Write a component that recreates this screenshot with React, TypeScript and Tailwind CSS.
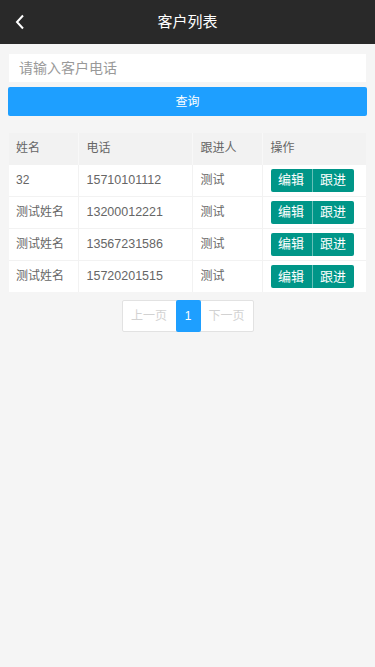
import React, { useState } from 'react';

interface Customer {
  name: string;
  phone: string;
  follower: string;
}

const customers: Customer[] = [
  { name: '32', phone: '15710101112', follower: '测试' },
  { name: '测试姓名', phone: '13200012221', follower: '测试' },
  { name: '测试姓名', phone: '13567231586', follower: '测试' },
  { name: '测试姓名', phone: '15720201515', follower: '测试' },
];

const font = { fontFamily: '"Liberation Sans", "Noto Sans CJK SC", sans-serif' };

const App: React.FC = () => {
  const [phone, setPhone] = useState('');

  return (
    <div className="min-h-[667px] bg-[#f5f5f5]" style={font}>
      <header className="relative h-11 bg-[#292929] flex items-center justify-center">
        <button className="absolute left-[10px] top-[12px] w-5 h-5 flex items-center justify-center">
          <svg className="w-[12px] h-[16px]" viewBox="0 0 12 16" fill="none" stroke="#fff" strokeWidth={2}>
            <path d="M9 1.5L3 8l6 6.5" />
          </svg>
        </button>
        <span className="text-white text-[15px]">客户列表</span>
      </header>

      <div className="px-2 pt-[10px]">
        <input
          value={phone}
          onChange={(e) => setPhone(e.target.value)}
          placeholder="请输入客户电话"
          className="block mx-px w-[calc(100%-2px)] h-[28px] bg-white px-[10px] text-[14px] text-[#333] placeholder:text-[#999] outline-none"
        />
        <button className="mt-[5px] w-full h-[29px] bg-[#1e9fff] text-white text-[12px] rounded-[2px]">
          查询
        </button>

        <table className="mt-[17px] mx-px w-[calc(100%-2px)] table-fixed border-collapse text-[12px] text-[#666]">
          <colgroup>
            <col className="w-[69px]" />
            <col className="w-[114px]" />
            <col className="w-[70px]" />
            <col />
          </colgroup>
          <thead>
            <tr className="h-[31px] bg-[#f2f2f2]">
              <th className="pl-[7px] text-left font-normal border-r border-[#f8f8f8]">姓名</th>
              <th className="pl-2 text-left font-normal border-r border-[#f8f8f8]">电话</th>
              <th className="pl-2 text-left font-normal border-r border-[#f8f8f8]">跟进人</th>
              <th className="pl-2 text-left font-normal">操作</th>
            </tr>
          </thead>
          <tbody className="bg-white">
            {customers.map((c) => (
              <tr key={c.phone} className="h-[32px] border-t border-[#f2f2f2]">
                <td className="pl-[7px] border-r border-[#f2f2f2]">{c.name}</td>
                <td className="pl-2 border-r border-[#f2f2f2] text-[12.5px]">{c.phone}</td>
                <td className="pl-2 border-r border-[#f2f2f2]">{c.follower}</td>
                <td className="pl-2">
                  <div className="flex w-[83px] h-[23px] rounded-[2px] overflow-hidden bg-[#009688] text-white text-[13px]">
                    <button className="w-[41px]">编辑</button>
                    <button className="flex-1 border-l border-white/40">跟进</button>
                  </div>
                </td>
              </tr>
            ))}
          </tbody>
        </table>

        <div className="mt-[8px] flex justify-center">
          <div className="flex h-[32px] text-[12px] border border-[#e2e2e2] rounded-[2px] bg-white">
            <span className="w-[53px] flex items-center justify-center text-[#d2d2d2]">上一页</span>
            <span className="w-[25px] -my-px flex items-center justify-center bg-[#1e9fff] text-white rounded-[2px]">1</span>
            <span className="w-[52px] flex items-center justify-center text-[#d2d2d2]">下一页</span>
          </div>
        </div>
      </div>
    </div>
  );
};

export default App;
